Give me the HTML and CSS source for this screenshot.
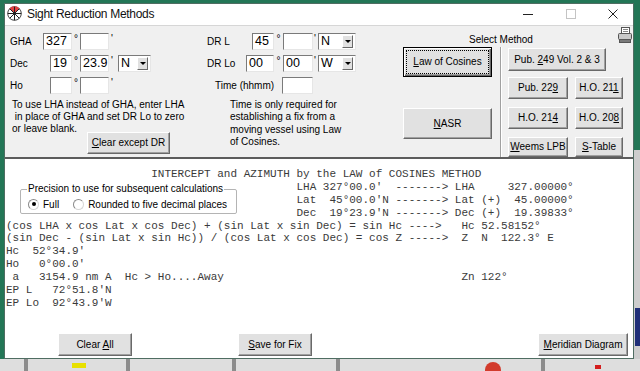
FILE: index.html
```html
<!DOCTYPE html>
<html>
<head>
<meta charset="utf-8">
<title>Sight Reduction Methods</title>
<link rel="stylesheet" href="styles.css">
</head>
<body>
<div class="window">
  <div class="titlebar">
    <svg class="app-icon" width="15" height="15" viewBox="0 0 15 15">
      <circle cx="7.5" cy="7.5" r="6.8" fill="#fff" stroke="#444" stroke-width="1"/>
      <path d="M7.5 7.5 L2.4 2.6 A6.8 6.8 0 0 1 12.6 2.6 Z" fill="#e04040"/>
      <path d="M7.5 0.7V14.3M0.7 7.5H14.3M2.7 2.7L12.3 12.3M12.3 2.7L2.7 12.3" stroke="#222" stroke-width="1"/>
    </svg>
    <span class="title">Sight Reduction Methods</span>
    <div class="caption">
      <span class="cap cap-min"><svg width="10" height="10"><path d="M0 5.5H10" stroke="#222" stroke-width="1"/></svg></span>
      <span class="cap cap-max"><svg width="10" height="10"><rect x="0.5" y="0.5" width="9" height="9" fill="none" stroke="#c4c4c4"/></svg></span>
      <span class="cap cap-close"><svg width="10" height="10"><path d="M0.5 0.5L9.5 9.5M9.5 0.5L0.5 9.5" stroke="#222" stroke-width="1"/></svg></span>
    </div>
  </div>

  <div class="panel">
    <div class="col-a">
      <div class="frow"><span class="lbl">GHA</span><span class="slot"><span class="box w29">327</span></span><span class="deg">°</span><span class="box w29"></span><span class="tick">'</span></div>
      <div class="frow"><span class="lbl">Dec</span><span class="slot"><span class="box w22">19</span></span><span class="deg">°</span><span class="box w29">23.9</span><span class="tick">'</span><span class="combo w33"><span class="cv">N</span><span class="dd"><span class="tri"></span></span></span></div>
      <div class="frow"><span class="lbl">Ho</span><span class="slot"><span class="box w22"></span></span><span class="deg">°</span><span class="box w29"></span><span class="tick">'</span></div>
      <div class="note-a">To use LHA instead of GHA, enter LHA
 in place of GHA and set DR Lo to zero</div>
      <div class="note-row"><span class="note-end">or leave blank.</span><button class="btn btn-clr"><span><u>C</u>lear except DR</span></button></div>
    </div>

    <div class="col-b">
      <div class="frow"><span class="lbl2">DR L</span><span class="slot2"><span class="box w22">45</span></span><span class="deg2">°</span><span class="box w30"></span><span class="tick2">'</span><span class="combo w38"><span class="cv">N</span><span class="dd"><span class="tri"></span></span></span></div>
      <div class="frow"><span class="lbl2">DR Lo</span><span class="slot2"><span class="box w28">00</span></span><span class="deg2">°</span><span class="box w30">00</span><span class="tick2">'</span><span class="combo w38"><span class="cv">W</span><span class="dd"><span class="tri"></span></span></span></div>
      <div class="frow"><span class="lbl-time">Time (hhmm)</span><span class="box w31"></span></div>
      <div class="note-b">Time is only required for<br>establishing a fix from a<br>moving vessel using Law<br>of Cosines.</div>
    </div>

    <div class="col-c">
      <div class="sm-head">
        <span class="sm-title">Select Method</span>
        <svg class="printer" width="14" height="17" viewBox="0 0 14 17">
          <rect x="3.5" y="0.5" width="8" height="6" fill="#fff" stroke="#555"/>
          <path d="M5 2.5H10M5 4.5H10" stroke="#888"/>
          <rect x="0.5" y="6.5" width="13" height="6" rx="1" fill="#c8c8c8" stroke="#555"/>
          <rect x="1.5" y="12.5" width="11" height="3" fill="#7a7a7a" stroke="#555"/>
        </svg>
      </div>
      <div class="sm-body">
        <div class="law-col">
          <button class="btn btn-law"><span><u>L</u>aw of Cosines</span></button>
          <button class="btn btn-nasr"><span><u>N</u>ASR</span></button>
        </div>
        <div class="vsep"></div>
        <div class="methods">
          <button class="btn m-249"><span>Pub. <u>2</u>49 Vol. 2 &amp; 3</span></button>
          <div class="mgrid">
            <button class="btn"><span>Pub. 22<u>9</u></span></button>
            <button class="btn"><span>H.O. 21<u>1</u></span></button>
            <button class="btn"><span>H.O. 21<u>4</u></span></button>
            <button class="btn"><span>H.O. 20<u>8</u></span></button>
            <button class="btn"><span><u>W</u>eems LPB</span></button>
            <button class="btn"><span><u>S</u>-Table</span></button>
          </div>
        </div>
      </div>
    </div>
  </div>

  <div class="output">
    <div class="out-text">
      <div class="ol i22">INTERCEPT and AZIMUTH by the LAW of COSINES METHOD</div>
      <div class="ol i44">LHA 327°00.0'  -------&gt; LHA     327.00000°</div>
      <div class="ol i44">Lat  45°00.0'N -------&gt; Lat (+)  45.00000°</div>
      <div class="ol i44">Dec  19°23.9'N -------&gt; Dec (+)  19.39833°</div>
      <div class="ol">(cos LHA x cos Lat x cos Dec) + (sin Lat x sin Dec) = sin Hc ----&gt;   Hc 52.58152°</div>
      <div class="ol">(sin Dec - (sin Lat x sin Hc)) / (cos Lat x cos Dec) = cos Z -----&gt;  Z  N  122.3° E</div>
      <div class="ol">Hc  52°34.9'</div>
      <div class="ol">Ho   0°00.0'</div>
      <div class="ol row-zn"><span class="c69"> a   3154.9 nm A  Hc &gt; Ho....Away</span><span>Zn 122°</span></div>
      <div class="ol">EP L   72°51.8'N</div>
      <div class="ol">EP Lo  92°43.9'W</div>
    </div>
    <fieldset class="precision">
      <legend>Precision to use for subsequent calculations</legend>
      <div class="radios">
        <span class="radio on"></span><span class="rlabel">Full</span>
        <span class="radio r2"></span><span class="rlabel">Rounded to five decimal places</span>
      </div>
    </fieldset>
    <div class="bottom-btns">
      <button class="btn b-clear"><span>Clear <u>A</u>ll</span></button>
      <button class="btn b-save"><span><u>S</u>ave for Fix</span></button>
      <button class="btn b-mer"><span><u>M</u>eridian Diagram</span></button>
    </div>
  </div>
</div>
<div class="desk-bottom">
  <span class="dk d1"></span><span class="dk d2"></span><span class="dk d3"></span><span class="dk d4"></span><span class="dk d5"></span><span class="dk d6"></span><span class="dk d7"></span><span class="dk d8"></span>
</div>
</body>
</html>
```

FILE: styles.css
```css
* { box-sizing: border-box; }
html, body { margin: 0; padding: 0; }
body {
  width: 640px;
  height: 371px;
  overflow: hidden;
  padding: 3px 0 0 4px;
  background:
    linear-gradient(#1f2f78, #1f2f78) 635px 308px / 5px 38px no-repeat,
    linear-gradient(#cdcdcd, #cdcdcd) 634px 150px / 6px 209px no-repeat,
    #237656;
  font-family: "Liberation Sans", Arial, sans-serif;
  font-size: 10px;
  color: #000;
}

.window {
  width: 630px;
  height: 356px;
  border: 1px solid #4f6d62;
  background: #fff;
  display: flex;
  flex-direction: column;
}

/* title bar */
.titlebar {
  height: 22px;
  flex: none;
  display: flex;
  align-items: center;
  background: #fff;
  border-bottom: 1px solid #d6d6d6;
  padding-bottom: 2px;
}
.app-icon { margin-left: 2px; flex: none; }
.title {
  margin-left: 5px;
  font-size: 12px;
  letter-spacing: -0.3px;
  color: #111;
}
.caption { margin-left: auto; display: flex; }
.cap { display: flex; align-items: center; justify-content: center; width: 43px; height: 18px; }
.cap-close { width: 41px; }

/* top panel */
.panel {
  height: 131px;
  flex: none;
  background: #f0f0f0;
  display: flex;
  align-items: flex-start;
}
.col-a { width: 202px; padding: 7px 0 0 5px; }
.col-b { width: 196px; padding-top: 7px; }
.col-c { width: 230px; display: flex; flex-direction: column; }

.frow { display: flex; align-items: center; height: 17px; margin-bottom: 5px; }
.lbl { width: 33px; }
.lbl2 { width: 34px; }
.lbl-time { width: 75px; padding-left: 8px; }
.slot { width: 29px; display: flex; justify-content: flex-end; }
.slot2 { width: 33px; display: flex; justify-content: flex-end; }
.deg, .deg2 {
  align-self: flex-start;
  font-size: 10px;
  line-height: 10px;
  text-align: center;
  margin-top: 1px;
}
.deg { width: 8px; }
.deg2 { width: 9px; }
.tick, .tick2 { align-self: flex-start; font-size: 10px; line-height: 10px; margin-top: 1px; }
.tick { width: 9px; padding-left: 2px; }
.tick2 { width: 5px; padding-left: 1px; }

.box {
  height: 17px;
  background: #fff;
  border: 1px solid;
  border-color: #7a7a7a #e6e6e6 #e6e6e6 #7a7a7a;
  font-size: 12.5px;
  line-height: 15px;
  padding-left: 2px;
  white-space: nowrap;
  overflow: hidden;
  flex: none;
}
.w22 { width: 22px; }
.w28 { width: 28px; }
.w29 { width: 29px; }
.w30 { width: 30px; }
.w31 { width: 31px; }
.w33 { width: 33px; }
.w38 { width: 38px; }

.combo {
  height: 17px;
  background: #fff;
  border: 1px solid;
  border-color: #7a7a7a #e6e6e6 #e6e6e6 #7a7a7a;
  display: flex;
  align-items: center;
  padding: 1px 2px 1px 1px;
  flex: none;
}
.cv { flex: 1; font-size: 12.5px; line-height: 13px; padding-left: 1px; }
.dd {
  width: 11px;
  height: 13px;
  background: #e1e1e1;
  border: 1px solid;
  border-color: #fff #696969 #696969 #fff;
  display: flex;
  align-items: center;
  justify-content: center;
}
.tri {
  width: 0;
  height: 0;
  border-left: 3px solid transparent;
  border-right: 3px solid transparent;
  border-top: 3px solid #000;
}

.note-a { white-space: pre; line-height: 12px; padding-left: 2px; }
.note-row { display: flex; align-items: flex-start; padding-left: 2px; }
.note-end { width: 75px; line-height: 12px; }
.note-b { margin-top: 1px; padding-left: 23px; line-height: 12.4px; white-space: nowrap; }

/* buttons */
.btn {
  font-family: "Liberation Sans", Arial, sans-serif;
  font-size: 10px;
  line-height: 1;
  color: #000;
  background: #e1e1e1;
  border: 1px solid;
  border-color: #fff #696969 #696969 #fff;
  box-shadow: inset -1px -1px #a0a0a0;
  padding: 0;
  margin: 0;
  display: flex;
  align-items: center;
  justify-content: center;
  white-space: nowrap;
}
.btn u { text-decoration: underline; text-underline-offset: 1px; }
.btn-clr { width: 83px; height: 22px; margin-top: 9px; }

.sm-head { height: 21px; display: flex; align-items: flex-start; }
.sm-title { margin-left: 66px; padding-top: 8px; line-height: 12px; }
.printer { margin-left: auto; margin-right: 1px; margin-top: 1px; }
.sm-body { display: flex; height: 110px; }
.law-col { width: 89px; display: flex; flex-direction: column; }
.btn-law {
  height: 30px;
  border: 1px solid #000;
  box-shadow: inset 1px 1px #fff, inset -1px -1px #696969, inset -2px -2px #a0a0a0;
  outline: 1px dotted #000;
  outline-offset: -4px;
}
.btn-nasr { height: 31px; margin-top: 31px; }
.vsep {
  margin-left: 8px;
  width: 2px;
  border-left: 1px solid #a0a0a0;
  border-right: 1px solid #fff;
}
.methods { margin-left: 6px; display: flex; flex-direction: column; }
.m-249 { width: 98px; height: 23px; margin-top: 1px; }
.mgrid {
  margin-top: 6px;
  display: grid;
  grid-template-columns: 60px 48px;
  grid-template-rows: 22px 22px 20px;
  column-gap: 7px;
  row-gap: 8px;
}

/* output */
.output {
  position: relative;
  height: 201px;
  flex: none;
  border-top: 2px solid #5c5c5c;
  background: #fff;
  display: flex;
  flex-direction: column;
}
.out-text {
  padding: 9px 0 0 1px;
  font-family: "Liberation Mono", "Courier New", monospace;
  font-size: 11px;
  line-height: 12.9px;
  color: #3a3a3a;
}
.ol { white-space: pre; height: 12.9px; }
.i22 { padding-left: 22ch; }
.i44 { padding-left: 44ch; }
.row-zn { display: flex; }
.c69 { width: 69ch; white-space: pre; }

.precision {
  position: absolute;
  left: 15px;
  top: 24px;
  width: 217px;
  height: 31px;
  margin: 0;
  padding: 0 4px 0 6px;
  border: 1px solid #b4b4b4;
  border-radius: 2px;
  min-width: 0;
}
.precision legend {
  padding: 0 1px;
  font-size: 10px;
  line-height: 12px;
}
.radios { display: flex; align-items: center; height: 14px; margin-top: 2px; }
.radio {
  width: 11px;
  height: 11px;
  border-radius: 50%;
  border: 1px solid #8a8a8a;
  border-right-color: #d6d6d6;
  border-bottom-color: #d6d6d6;
  background: #fff;
  margin-left: 1px;
  display: flex;
  align-items: center;
  justify-content: center;
  flex: none;
}
.radio.on::after {
  content: "";
  width: 4px;
  height: 4px;
  border-radius: 50%;
  background: #000;
}
.radio.r2 { margin-left: 14px; }
.rlabel { margin-left: 4px; }

.bottom-btns { margin-top: auto; display: flex; padding-bottom: 2px; }
.b-clear { margin-left: 53px; width: 74px; height: 23px; }
.b-save { margin-left: 106px; width: 74px; height: 23px; }
.b-mer { margin-left: auto; margin-right: 5px; width: 90px; height: 23px; }

/* desktop strip below the window */
.desk-bottom {
  margin-left: -4px;
  width: 640px;
  height: 12px;
  background: #dedede;
  display: flex;
  align-items: flex-start;
}
.dk { display: block; height: 12px; }
.d1 { width: 4px; margin-left: 24px; background: #8c8c8c; }
.d2 { width: 14px; margin-left: 44px; background: #e8e000; height: 5px; margin-top: 4px; }
.d3 { width: 4px; margin-left: 40px; background: #8c8c8c; }
.d4 { width: 4px; margin-left: 102px; background: #8c8c8c; }
.d5 { width: 4px; margin-left: 100px; background: #8c8c8c; }
.d6 { width: 16px; margin-left: 145px; background: #d23b2c; border-radius: 8px 8px 0 0; margin-top: 3px; height: 9px; }
.d7 { width: 4px; margin-left: 40px; background: #8c8c8c; }
.d8 { width: 6px; margin-left: 50px; background: #d41e1e; height: 4px; margin-top: 6px; }
```
